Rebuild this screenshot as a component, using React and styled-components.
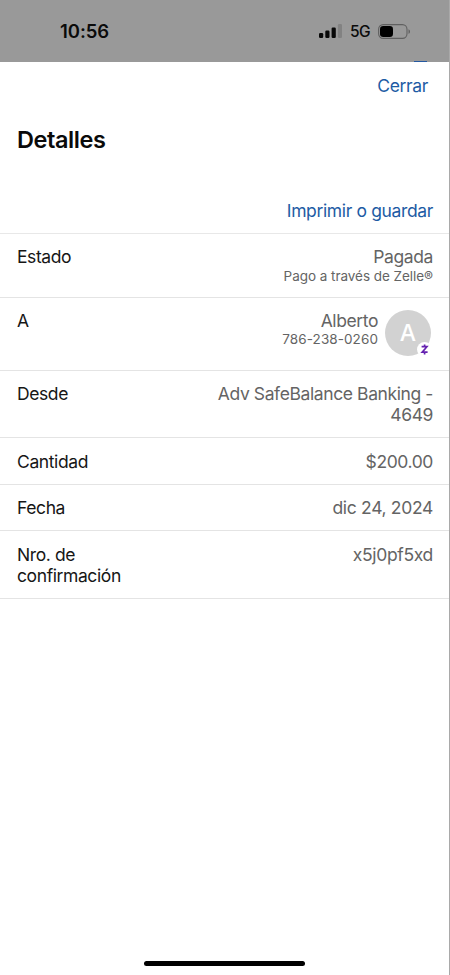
import React from "react";
import styled, { createGlobalStyle } from "styled-components";

const Global = createGlobalStyle`
  * { box-sizing: border-box; }
  body { margin: 0; background: #fff; font-family: Inter, "Liberation Sans", sans-serif; }
`;

const Screen = styled.main`
  width: 450px;
  height: 975px;
  display: flex;
  flex-direction: column;
  overflow: hidden;
  background: #fff;
  border-right: 1px solid #a9a9a9;
`;

const StatusBar = styled.header`
  height: 62px;
  flex: none;
  display: flex;
  align-items: center;
  justify-content: space-between;
  padding: 0 38px 0 60px;
  background: #999;
  color: #0b0b0b;
  position: relative;
`;

const Clock = styled.time`
  font-size: 18.5px;
  font-weight: 600;
  letter-spacing: -0.05px;
`;

const Indicators = styled.div`
  display: flex;
  align-items: center;
`;

const Network = styled.span`
  width: 20px;
  margin: 1px 8px 0 8px;
  font-size: 15.5px;
  font-weight: 500;
  letter-spacing: -0.6px;
`;

const HiddenPageEdge = styled.span`
  position: absolute;
  right: 22px;
  bottom: 0;
  width: 13px;
  height: 1px;
  background: #2458a0;
`;

const Toolbar = styled.div`
  flex: none;
  height: 47px;
  display: flex;
  justify-content: flex-end;
  align-items: center;
  padding-right: 21px;
`;

const LinkButton = styled.button`
  border: 0;
  padding: 0;
  background: none;
  color: #1d5ba4;
  font: 400 17.5px/21px Inter, "Liberation Sans", sans-serif;
  letter-spacing: -0.36px;
`;

const Title = styled.h1`
  flex: none;
  margin: 16px 0 0 17px;
  font-size: 23.5px;
  line-height: 29px;
  font-weight: 600;
  letter-spacing: -0.42px;
  color: #0a0a0a;
`;

const Actions = styled.div`
  flex: none;
  height: 79px;
  display: flex;
  justify-content: flex-end;
  align-items: flex-end;
  padding: 0 16px 12px;
`;

const List = styled.dl`
  margin: 0;
  flex: 1;
  border-top: 1px solid #e8e8e8;
`;

const Row = styled.div`
  height: ${(p) => p.$height}px;
  display: flex;
  justify-content: space-between;
  padding: ${(p) => p.$top || 12}px 16px 0 17px;
  border-bottom: 1px solid #e4e4e4;
`;

const Label = styled.dt`
  width: 130px;
  font-size: 17.5px;
  line-height: 21px;
  letter-spacing: -0.4px;
  color: #161616;
`;

const Value = styled.dd`
  margin: 0;
  width: 230px;
  text-align: right;
  font-size: 17.5px;
  line-height: 21px;
  letter-spacing: ${(p) => p.$tracking || -0.4}px;
  color: #646464;
`;

const Note = styled.div`
  font-size: 13.5px;
  line-height: ${(p) => p.$line || 17}px;
  letter-spacing: ${(p) => p.$tracking || 0}px;
`;

const Contact = styled.div`
  display: flex;
  justify-content: flex-end;
  gap: 7px;
`;

const Avatar = styled.div`
  position: relative;
  width: 46px;
  height: 46px;
  margin-right: 2px;
  border-radius: 50%;
  background: #d2d2d2;
  color: #fff;
  font-size: 23px;
  line-height: 47px;
  font-weight: 500;
  text-align: center;
  letter-spacing: 0;
`;

const Badge = styled.span`
  position: absolute;
  right: -1px;
  bottom: -1px;
  width: 15px;
  height: 15px;
  border-radius: 50%;
  background: #fff;
  display: flex;
`;

const HomeArea = styled.footer`
  flex: none;
  height: 14px;
  display: flex;
  justify-content: center;
`;

const HomeIndicator = styled.div`
  width: 161px;
  height: 5px;
  border-radius: 3px;
  background: #000;
`;

const Signal = () => (
  <svg width="23" height="15" viewBox="0 0 23 15">
    <rect x="0" y="9" width="4.2" height="5" rx="1.2" fill="#080808" />
    <rect x="6.3" y="6.5" width="4.2" height="7.5" rx="1.2" fill="#080808" />
    <rect x="12.6" y="3.5" width="4.2" height="10.5" rx="1.2" fill="#080808" />
    <rect x="18.9" y="0" width="4.1" height="14" rx="1.2" fill="#828282" />
  </svg>
);

const Battery = () => (
  <svg width="33" height="15" viewBox="0 0 33 15">
    <rect x="0.6" y="0.6" width="28.4" height="13.8" rx="4.6" fill="none" stroke="#606060" strokeWidth="1.1" />
    <rect x="2" y="2" width="13" height="11" rx="3.2" fill="#000" />
    <path d="M30.5 5.2c2 .8 2 3.8 0 4.6z" fill="#606060" />
  </svg>
);

const ZelleMark = () => (
  <svg width="15" height="15" viewBox="0 0 15 15" fill="none" stroke="#6522b0" strokeWidth="1.7">
    <path d="M4.6 4.7h5.3L5.2 10.2h5.4M7.6 2.4v2.3M7.6 10.2v2.3" />
  </svg>
);

export default function App() {
  return (
    <>
      <Global />
      <Screen>
        <StatusBar>
          <Clock>10:56</Clock>
          <Indicators>
            <Signal />
            <Network>5G</Network>
            <Battery />
          </Indicators>
          <HiddenPageEdge />
        </StatusBar>
        <Toolbar>
          <LinkButton>Cerrar</LinkButton>
        </Toolbar>
        <Title>Detalles</Title>
        <Actions>
          <LinkButton>Imprimir o guardar</LinkButton>
        </Actions>
        <List>
          <Row $height={64}>
            <Label>Estado</Label>
            <Value>
              Pagada
              <Note $line={19} $tracking={-0.04}>Pago a través de Zelle®</Note>
            </Value>
          </Row>
          <Row $height={73}>
            <Label>A</Label>
            <Value>
              <Contact>
                <div>
                  Alberto
                  <Note $tracking={0.08}>786-238-0260</Note>
                </div>
                <Avatar>
                  A
                  <Badge>
                    <ZelleMark />
                  </Badge>
                </Avatar>
              </Contact>
            </Value>
          </Row>
          <Row $height={67}>
            <Label>Desde</Label>
            <Value>Adv SafeBalance Banking - 4649</Value>
          </Row>
          <Row $height={47} $top={13}>
            <Label>Cantidad</Label>
            <Value>$200.00</Value>
          </Row>
          <Row $height={46}>
            <Label>Fecha</Label>
            <Value $tracking={-0.32}>dic 24, 2024</Value>
          </Row>
          <Row $height={68} $top={13}>
            <Label>Nro. de confirmación</Label>
            <Value $tracking={-0.32}>x5j0pf5xd</Value>
          </Row>
        </List>
        <HomeArea>
          <HomeIndicator />
        </HomeArea>
      </Screen>
    </>
  );
}
